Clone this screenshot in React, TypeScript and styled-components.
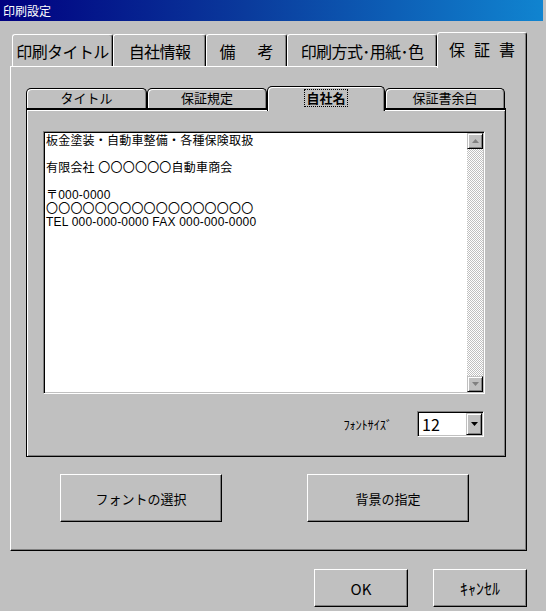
import React from 'react';
import styled, { createGlobalStyle } from 'styled-components';

const JP = `'Noto Sans CJK JP', 'Noto Sans', sans-serif`;

const GlobalStyle = createGlobalStyle`
  html, body {
    margin: 0;
    padding: 0;
    background: #c0c0c0;
  }
  body {
    font-family: ${JP};
    color: #000;
  }
`;

const Window = styled.div`
  width: 546px;
  height: 611px;
  display: flex;
  flex-direction: column;
  background: #c0c0c0;
  overflow: hidden;
  font-family: ${JP};
`;

const TitleBar = styled.div`
  height: 21px;
  margin-right: 3px;
  display: flex;
  align-items: center;
  padding-left: 3px;
  background: linear-gradient(90deg, #000080 0%, #0a3a9c 45%, #1084d0 100%);
  color: #fff;
  font-size: 12px;
`;

const Body = styled.div`
  display: flex;
  flex-direction: column;
  padding: 11px 19px 0 10px;
`;

const OuterTabRow = styled.div`
  display: flex;
  align-items: flex-end;
  height: 34px;
  padding-left: 2px;
`;

const OuterTab = styled.div<{ $w: number; $active?: boolean; $ls?: number }>`
  box-sizing: border-box;
  width: ${(p) => p.$w}px;
  height: ${(p) => (p.$active ? 36 : 32)}px;
  margin-bottom: ${(p) => (p.$active ? -2 : 0)}px;
  position: relative;
  z-index: ${(p) => (p.$active ? 2 : 0)};
  display: flex;
  align-items: center;
  justify-content: center;
  padding-bottom: ${(p) => (p.$active ? 3 : 0)}px;
  padding-left: ${(p) => p.$ls ?? 0}px;
  background: #c0c0c0;
  border-top: 1px solid #fff;
  border-left: 1px solid #fff;
  border-right: 1px solid #000;
  border-radius: 3px 3px 0 0;
  box-shadow: inset -1px 0 0 #808080;
  font-size: 16px;
  letter-spacing: ${(p) => p.$ls ?? -0.6}px;
  white-space: pre;
`;

const OuterPanel = styled.div`
  box-sizing: border-box;
  height: 485px;
  display: flex;
  flex-direction: column;
  padding: 19px 20px 0 15px;
  border-top: 1px solid #fff;
  border-left: 1px solid #fff;
  border-right: 1px solid #000;
  border-bottom: 1px solid #000;
  box-shadow: inset -1px -1px 0 #808080;
`;

const InnerTabRow = styled.div`
  display: flex;
  align-items: flex-end;
  height: 22px;
`;

const InnerTab = styled.div<{ $w: number; $active?: boolean }>`
  box-sizing: border-box;
  width: ${(p) => p.$w}px;
  height: ${(p) => (p.$active ? 25 : 20)}px;
  margin-bottom: ${(p) => (p.$active ? -3 : 0)}px;
  position: relative;
  z-index: ${(p) => (p.$active ? 2 : 0)};
  display: flex;
  align-items: flex-start;
  justify-content: center;
  padding-top: ${(p) => (p.$active ? 3 : 1)}px;
  background: #c0c0c0;
  border: 1px solid #000;
  border-bottom: none;
  border-radius: 5px 5px 0 0;
  box-shadow: inset 1px 1px 0 #fff, inset -1px 0 0 #808080;
  font-size: 13px;
  line-height: 16px;
  font-weight: ${(p) => (p.$active ? 700 : 400)};
`;

const FocusRing = styled.span`
  padding: 0 1px;
  outline: 1px dotted #000;
  outline-offset: 0;
`;

const InnerPanel = styled.div`
  box-sizing: border-box;
  height: 349px;
  display: flex;
  flex-direction: column;
  padding: 21px 20px 0 16px;
  border: 1px solid #000;
  border-top-width: 2px;
  box-shadow: inset 1px 1px 0 #fff, inset -1px -1px 0 #808080;
`;

const EditBox = styled.div`
  box-sizing: border-box;
  height: 263px;
  display: flex;
  border: 1px solid;
  border-color: #808080 #fff #fff #808080;
  box-shadow: inset 1px 1px 0 #000, inset -1px -1px 0 #c0c0c0;
  padding: 1px;
`;

const TextBody = styled.div`
  flex: 1;
  background: #fff;
  padding: 2px 2px 0 1px;
  font-family: 'Liberation Sans', 'Noto Sans CJK JP', sans-serif;
  font-size: 12px;
  line-height: 13.5px;
  letter-spacing: 0.2px;
  white-space: pre;
`;

const ScrollBar = styled.div`
  width: 16px;
  display: flex;
  flex-direction: column;
`;

const ScrollTrack = styled.div`
  flex: 1;
  background-color: #c0c0c0;
  background-image: conic-gradient(#fff 25%, #c0c0c0 0 50%, #fff 0 75%, #c0c0c0 0);
  background-size: 2px 2px;
`;

const ArrowButton = styled.div<{ $h?: number }>`
  box-sizing: border-box;
  width: 16px;
  height: ${(p) => p.$h ?? 16}px;
  display: flex;
  align-items: center;
  justify-content: center;
  background: #c0c0c0;
  border: 1px solid;
  border-color: #c0c0c0 #000 #000 #c0c0c0;
  box-shadow: inset 1px 1px 0 #fff, inset -1px -1px 0 #808080;
`;

const SizeRow = styled.div`
  display: flex;
  justify-content: flex-end;
  align-items: center;
  gap: 25px;
  margin-top: 17px;
  padding-right: 1px;
`;

const SizeLabel = styled.span`
  font-size: 12.5px;
  letter-spacing: -0.2px;
`;

const SelectBox = styled.div`
  box-sizing: border-box;
  width: 67px;
  height: 26px;
  display: flex;
  background: #fff;
  border: 1px solid;
  border-color: #808080 #fff #fff #808080;
  box-shadow: inset 1px 1px 0 #000, inset -1px -1px 0 #c0c0c0;
  padding: 1px;
`;

const SelectValue = styled.span`
  flex: 1;
  padding-left: 3px;
  font-size: 16px;
  line-height: 22px;
`;

const PanelButtons = styled.div`
  display: flex;
  gap: 85px;
  margin-top: 17px;
  padding-left: 34px;
`;

const Button = styled.div<{ $w: number; $h: number; $size?: number }>`
  box-sizing: border-box;
  width: ${(p) => p.$w}px;
  height: ${(p) => p.$h}px;
  display: flex;
  align-items: center;
  justify-content: center;
  background: #c0c0c0;
  border: 1px solid;
  border-color: #fff #000 #000 #fff;
  box-shadow: inset -1px -1px 0 #808080;
  font-size: ${(p) => p.$size ?? 13}px;
`;

const DialogButtons = styled.div`
  display: flex;
  justify-content: flex-end;
  gap: 25px;
  margin-top: 18px;
`;

const Arrow = ({ up, color = '#000' }: { up?: boolean; color?: string }) => (
  <svg width="7" height="4" viewBox="0 0 7 4">
    <path d={up ? 'M3.5 0 L7 4 L0 4 Z' : 'M0 0 L7 0 L3.5 4 Z'} fill={color} />
  </svg>
);

const outerTabs = [
  { label: '印刷タイトル', w: 101 },
  { label: '自社情報', w: 93 },
  { label: '備　考', w: 81, ls: 3 },
  { label: '印刷方式･用紙･色', w: 150 },
  { label: '保証書', w: 90, active: true, ls: 9 },
];

const innerTabs = [
  { label: 'タイトル', w: 121 },
  { label: '保証規定', w: 120 },
  { label: '自社名', w: 118, active: true },
  { label: '保証書余白', w: 120 },
];

const memo = [
  '板金塗装・自動車整備・各種保険取扱',
  '',
  '有限会社 〇〇〇〇〇〇自動車商会',
  '',
  '〒000-0000',
  '〇〇〇〇〇〇〇〇〇〇〇〇〇〇〇〇〇',
  'TEL 000-000-0000 FAX 000-000-0000',
].join('\n');

export default function App() {
  return (
    <Window>
      <GlobalStyle />
      <TitleBar>印刷設定</TitleBar>
      <Body>
        <OuterTabRow>
          {outerTabs.map((t) => (
            <OuterTab key={t.label} $w={t.w} $active={t.active} $ls={t.ls}>
              {t.label}
            </OuterTab>
          ))}
        </OuterTabRow>
        <OuterPanel>
          <InnerTabRow>
            {innerTabs.map((t) => (
              <InnerTab key={t.label} $w={t.w} $active={t.active}>
                {t.active ? <FocusRing>{t.label}</FocusRing> : t.label}
              </InnerTab>
            ))}
          </InnerTabRow>
          <InnerPanel>
            <EditBox>
              <TextBody>{memo}</TextBody>
              <ScrollBar>
                <ArrowButton>
                  <Arrow up color="#808080" />
                </ArrowButton>
                <ScrollTrack />
                <ArrowButton>
                  <Arrow color="#808080" />
                </ArrowButton>
              </ScrollBar>
            </EditBox>
            <SizeRow>
              <SizeLabel>ﾌｫﾝﾄｻｲｽﾞ</SizeLabel>
              <SelectBox>
                <SelectValue>12</SelectValue>
                <ArrowButton $h={22}>
                  <Arrow />
                </ArrowButton>
              </SelectBox>
            </SizeRow>
          </InnerPanel>
          <PanelButtons>
            <Button $w={162} $h={48}>フォントの選択</Button>
            <Button $w={162} $h={48}>背景の指定</Button>
          </PanelButtons>
        </OuterPanel>
        <DialogButtons>
          <Button $w={94} $h={38} $size={15}>OK</Button>
          <Button $w={94} $h={38} $size={16}>ｷｬﾝｾﾙ</Button>
        </DialogButtons>
      </Body>
    </Window>
  );
}
